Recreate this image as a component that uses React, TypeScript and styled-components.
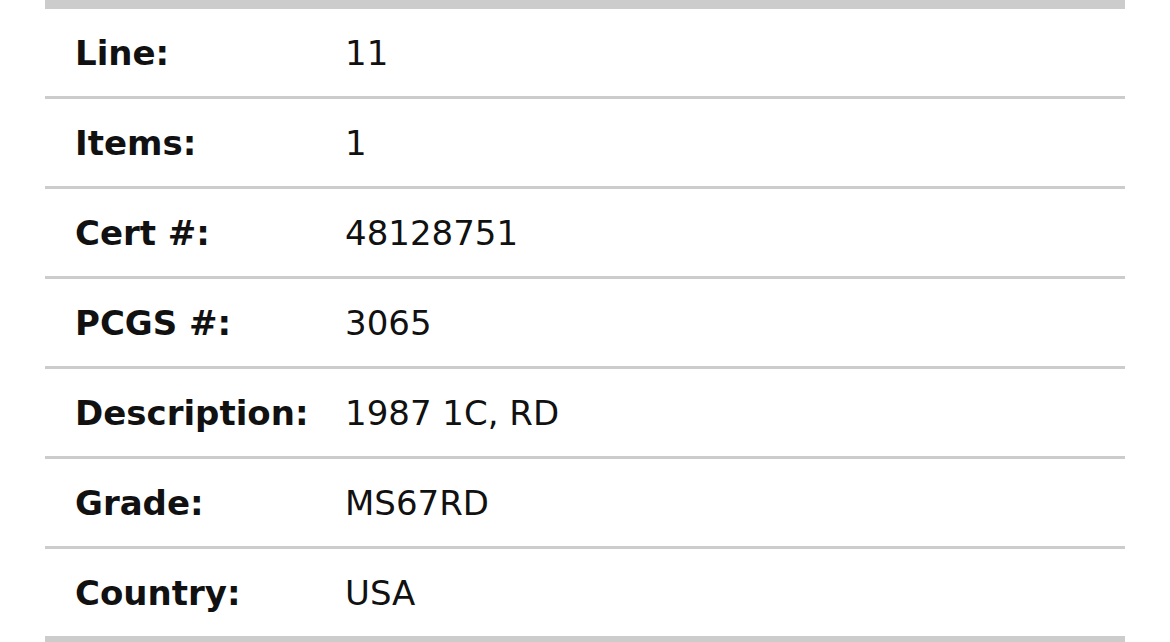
import React from "react";
import styled, { createGlobalStyle } from "styled-components";

const GlobalStyle = createGlobalStyle`
  html, body {
    margin: 0;
    padding: 0;
    background: #ffffff;
    overflow: hidden;
  }
  body {
    font-family: "DejaVu Sans", "Liberation Sans", sans-serif;
    color: #111111;
  }
`;

const Page = styled.div`
  padding: 0 45px;
`;

const Table = styled.div`
  display: flex;
  flex-direction: column;
  border-top: 9px solid #cccccc;
  border-bottom: 6px solid #cccccc;
`;

const Row = styled.div<{ $last?: boolean }>`
  display: grid;
  grid-template-columns: 300px 1fr;
  align-items: center;
  height: 87px;
  border-bottom: ${(p) => (p.$last ? "none" : "3px solid #cccccc")};
`;

const Label = styled.div`
  padding-left: 30px;
  font-size: 34px;
  font-weight: 700;
  color: #111111;
  white-space: nowrap;
`;

const Value = styled.div`
  font-size: 34px;
  font-weight: 400;
  color: #111111;
  white-space: nowrap;
`;

const rows: [string, string][] = [
  ["Line:", "11"],
  ["Items:", "1"],
  ["Cert #:", "48128751"],
  ["PCGS #:", "3065"],
  ["Description:", "1987 1C, RD"],
  ["Grade:", "MS67RD"],
  ["Country:", "USA"],
];

export default function App() {
  return (
    <>
      <GlobalStyle />
      <Page>
        <Table>
          {rows.map(([label, value], i) => (
            <Row key={label} $last={i === rows.length - 1}>
              <Label>{label}</Label>
              <Value>{value}</Value>
            </Row>
          ))}
        </Table>
      </Page>
    </>
  );
}
